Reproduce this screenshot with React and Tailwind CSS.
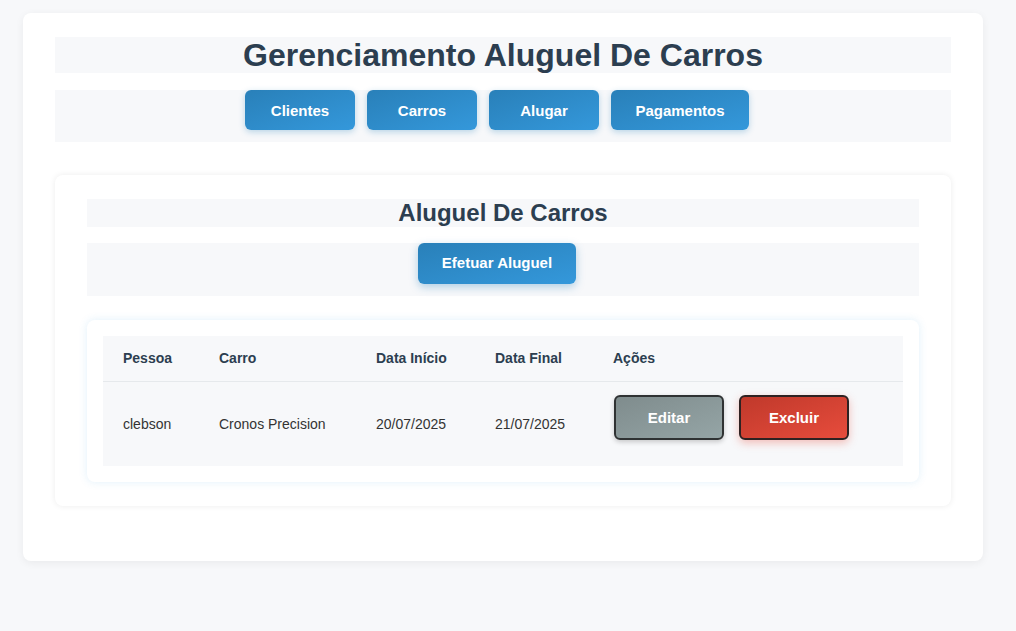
const rentals = [
  { pessoa: "clebson", carro: "Cronos Precision", inicio: "20/07/2025", fim: "21/07/2025" },
]

const navItems = [
  { label: "Clientes", w: "w-[110px]" },
  { label: "Carros", w: "w-[110px]" },
  { label: "Alugar", w: "w-[110px]" },
  { label: "Pagamentos", w: "w-[138px]" },
]

export default function App() {
  return (
    <div className="min-h-[631px] bg-[#f7f8fa] pt-[13px] px-[23px] font-['Liberation_Sans',Arial,sans-serif] text-[#333]">
      <div className="w-[960px] h-[548px] rounded-lg bg-white px-8 pt-6 shadow-[0_2px_8px_rgba(0,0,0,0.06)]">
        {/* header */}
        <div className="bg-[#f7f8fa] h-9 flex items-center justify-center">
          <h1 className="text-[32px] font-bold text-[#2c3e50] leading-9">Gerenciamento Aluguel De Carros</h1>
        </div>
        <nav className="mt-[17px] bg-[#f7f8fa] h-[52px] flex justify-center">
          {navItems.map((item) => (
            <button
              key={item.label}
              className={`${item.w} mr-3 h-10 rounded-md bg-gradient-to-br from-[#2980b9] to-[#3498db] text-white text-[15px] font-bold leading-10 shadow-[0_2px_6px_rgba(41,128,185,0.3)]`}
            >
              <span className="relative top-px">{item.label}</span>
            </button>
          ))}
        </nav>

        {/* section */}
        <section className="mt-[33px] h-[331px] rounded-lg bg-white px-8 pt-6 shadow-[0_0_6px_rgba(0,0,0,0.08)]">
          <div className="bg-[#f7f8fa] h-7 flex items-center justify-center">
            <h2 className="text-2xl font-bold text-[#2c3e50] leading-7">Aluguel De Carros</h2>
          </div>
          <div className="mt-4 bg-[#f7f8fa] h-[53px] flex justify-center">
            <button className="mr-3 w-[158px] h-[41px] rounded-md bg-gradient-to-br from-[#2980b9] to-[#3498db] text-white text-[15px] font-bold shadow-[0_3px_8px_rgba(41,128,185,0.35)]">
              Efetuar Aluguel
            </button>
          </div>

          <div className="mt-6 rounded-lg bg-white p-4 shadow-[0_0_8px_rgba(52,152,219,0.15)]">
            <table className="w-full bg-[#f7f8fa] text-sm text-left border-collapse">
              <thead>
                <tr className="h-[45px] border-b border-[#e6e9ec]">
                  <th className="w-[96px] pl-5 font-bold text-[#2c3e50]">Pessoa</th>
                  <th className="w-[157px] pl-5 font-bold text-[#2c3e50]">Carro</th>
                  <th className="w-[119px] pl-5 font-bold text-[#2c3e50]">Data Início</th>
                  <th className="w-[118px] pl-5 font-bold text-[#2c3e50]">Data Final</th>
                  <th className="pl-5 font-bold text-[#2c3e50]">Ações</th>
                </tr>
              </thead>
              <tbody>
                {rentals.map((r) => (
                  <tr key={r.pessoa} className="h-[85px]">
                    <td className="pl-5">{r.pessoa}</td>
                    <td className="pl-5">{r.carro}</td>
                    <td className="pl-5">{r.inicio}</td>
                    <td className="pl-5">{r.fim}</td>
                    <td className="pl-[21px]">
                      <div className="flex gap-[15px] mb-[13px]">
                        <button className="w-[110px] h-[45px] rounded-md border-2 border-[#2f3233] bg-gradient-to-br from-[#7f8c8d] to-[#95a5a6] text-white text-[15px] font-bold shadow-[0_2px_5px_rgba(0,0,0,0.2)]">
                          Editar
                        </button>
                        <button className="w-[110px] h-[45px] rounded-md border-2 border-[#2f2222] bg-gradient-to-br from-[#c0392b] to-[#e74c3c] text-white text-[15px] font-bold shadow-[0_3px_8px_rgba(231,76,60,0.35)]">
                          Excluir
                        </button>
                      </div>
                    </td>
                  </tr>
                ))}
              </tbody>
            </table>
          </div>
        </section>
      </div>
    </div>
  )
}
